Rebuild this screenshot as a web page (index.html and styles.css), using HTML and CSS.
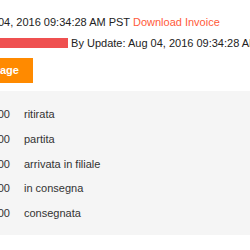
FILE: index.html
```html
<!DOCTYPE html>
<html>
<head>
<meta charset="utf-8">
<link rel="stylesheet" href="styles.css">
</head>
<body>
<div class="page">
  <p class="line line-first"><span class="date">04, 2016 09:34:28 AM PST</span> <a class="invoice">Download Invoice</a></p>
  <p class="line line-second"><span class="redact"></span> By Update: Aug 04, 2016 09:34:28 AM PST</p>
  <div class="actions"><span class="btn">age</span></div>
  <div class="track">
    <div class="row"><span class="time">00</span><span class="status">ritirata</span></div>
    <div class="row"><span class="time">00</span><span class="status">partita</span></div>
    <div class="row"><span class="time">00</span><span class="status">arrivata in filiale</span></div>
    <div class="row"><span class="time">00</span><span class="status">in consegna</span></div>
    <div class="row"><span class="time">00</span><span class="status">consegnata</span></div>
  </div>
</div>
</body>
</html>
```

FILE: styles.css
```css
html, body {
  margin: 0;
  padding: 0;
  background: #fff;
  overflow: hidden;
}
.page {
  font-family: "Liberation Sans", Arial, sans-serif;
  font-size: 11px;
  color: #222;
  white-space: nowrap;
  padding-top: 14px;
}
.line {
  margin: 0;
  line-height: 16px;
}
.line-first {
  margin-left: -2px;
}
.line-second {
  margin-top: 5px;
}
.invoice {
  color: #ff5b3a;
}
.redact {
  display: inline-block;
  width: 68px;
  height: 10px;
  background: #ef5050;
  vertical-align: -1px;
}
.actions {
  margin-top: 7px;
}
.btn {
  display: inline-block;
  height: 25px;
  line-height: 25px;
  padding: 0 16px 0 0;
  width: 17px;
  background: #ff8a00;
  color: #fff;
  font-weight: bold;
  font-size: 11px;
  text-align: right;
}
.track {
  margin-top: 8px;
  background: #f5f5f5;
  padding: 11px 0 9px;
}
.row {
  display: flex;
  height: 24.75px;
  line-height: 24.75px;
  color: #333;
}
.time {
  width: 10px;
  text-align: right;
  overflow: visible;
  direction: rtl;
}
.status {
  margin-left: 14px;
}
```
